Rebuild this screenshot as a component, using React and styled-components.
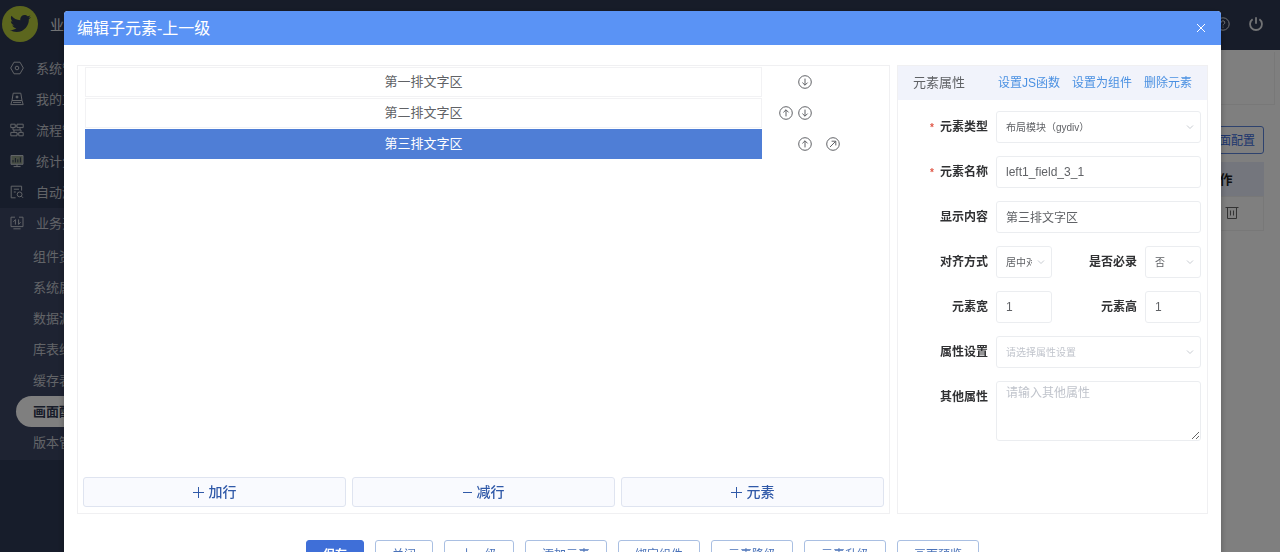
import React, { useState } from 'react';
import styled, { createGlobalStyle, css } from 'styled-components';
import { FaTwitter } from 'react-icons/fa';

const MENUS = [
  { label: '系统管理', icon: 'hexagon' },
  { label: '我的工作', icon: 'desk' },
  { label: '流程管理', icon: 'flow' },
  { label: '统计分析', icon: 'chart' },
  { label: '自动测试', icon: 'search' },
  { label: '业务开发', icon: 'dev' },
];

const SUB_MENUS = [
  '组件资源',
  '系统属性',
  '数据源',
  '库表维护',
  '缓存表',
  '画面配置',
  '版本管理',
];

const ROWS = [
  { label: '第一排文字区', down: true },
  { label: '第二排文字区', up: true, down: true },
  { label: '第三排文字区', up: true, open: true },
];

const FOOTER_BUTTONS = [
  '保存',
  '关闭',
  '上一级',
  '添加元素',
  '绑定组件',
  '元素降级',
  '元素升级',
  '画面预览',
];

const MENU_ICONS = {
  hexagon: (
    <>
      <path d="M4 1.2h6L13.3 7 10 12.8H4L.7 7z" />
      <circle cx="7" cy="7" r="1.8" />
    </>
  ),
  desk: (
    <>
      <path d="M3.2 1.2h7.6l1.2 7.3H2zM2 8.5L.8 12.6h12.4L12 8.5" />
      <circle cx="7" cy="5" r="1" fill="currentColor" />
      <path d="M3 10.4h8" />
    </>
  ),
  flow: (
    <>
      <path d="M.8 1.2h4.4v3.4H.8zM7 1.2h6.2v3.4H7zM.8 9.4H7v3.4H.8zM8.8 9.4h4.4v3.4H8.8z" />
      <path d="M5.2 3H7M3 4.6V7h8v2.4M10 4.6V7M4 7v2.4M7 11h1.8" />
    </>
  ),
  chart: (
    <>
      <path d="M1 1.5h12v8.8H1z" fill="#8c9a86" />
      <path d="M3 8.4V6M5.4 8.4V4M7.8 8.4V5.4M10.4 8.4V3.4" stroke="#2f3a56" />
      <path d="M3.6 12.6h7M7 10.3v2.3" />
    </>
  ),
  search: (
    <>
      <path d="M5.6 12.8H1.2V1.2h10.4v4.4M3.8 4.2h5.2M3.8 7h2" />
      <circle cx="9.6" cy="9.4" r="2.4" />
      <path d="M11.4 11.2l1.6 1.6" />
    </>
  ),
  dev: (
    <>
      <path d="M5 1.2H1v9.4h12V1.2H9M3.4 12.8h7.2" />
      <path d="M5.4 8.6V3.6L3.4 5.8M8.6 3.4v5l2-2.2" />
    </>
  ),
};

const ARROWS = {
  up: 'M7 10.4V3.8M4.4 6.4L7 3.8l2.6 2.6',
  down: 'M7 3.6v6.6M4.4 7.6L7 10.2l2.6-2.6',
  open: 'M4 10l5.6-5.6M5.6 4.2h4.2v4.2',
};

const ArrowButton = ({ type, label }) => (
  <IconButton type="button" aria-label={label}>
    <svg width="14" height="14" viewBox="0 0 14 14" fill="none" stroke="currentColor">
      <circle cx="7" cy="7" r="6.3" />
      <path d={ARROWS[type]} />
    </svg>
  </IconButton>
);

const SelectBox = ({ id, placeholder, children }) => (
  <SelectWrapper>
    <Select id={id} $placeholder={placeholder}>
      {children}
    </Select>
    <svg width="8" height="8" viewBox="0 0 8 8" fill="none" stroke="#c8ccd2">
      <path d="M1 2.5l3 3 3-3" />
    </svg>
  </SelectWrapper>
);

const Sidebar = () => (
  <SidebarNav>
    {MENUS.map(({ label, icon }, i) => (
      <MenuItem href="#" key={label} $open={i === MENUS.length - 1}>
        <svg width="14" height="14" viewBox="0 0 14 14" fill="none" stroke="currentColor">
          {MENU_ICONS[icon]}
        </svg>
        {label}
      </MenuItem>
    ))}
    <SubMenu>
      {SUB_MENUS.map((label) => (
        <SubMenuItem href="#" key={label} $active={label === '画面配置'}>
          {label}
        </SubMenuItem>
      ))}
    </SubMenu>
  </SidebarNav>
);

const Background = () => (
  <Page>
    <TopBar>
      <Logo>
        <FaTwitter size={21} />
      </Logo>
      <Brand>业务</Brand>
      <TopActions>
        <IconButton type="button" aria-label="帮助">
          <svg width="14" height="14" viewBox="0 0 14 14" fill="none" stroke="currentColor">
            <circle cx="7" cy="7" r="6.2" />
            <path d="M5.2 5.6a1.8 1.8 0 1 1 2.6 1.6c-.6.3-.8.6-.8 1.2M7 9.6v1" />
          </svg>
        </IconButton>
        <IconButton type="button" aria-label="退出">
          <svg
            width="14"
            height="14"
            viewBox="0 0 14 14"
            fill="none"
            stroke="currentColor"
            strokeWidth="1.8"
          >
            <path d="M3.6 2.3a5.9 5.9 0 1 0 6.8 0M7 .3v6.5" />
          </svg>
        </IconButton>
      </TopActions>
    </TopBar>
    <PageBody>
      <Sidebar />
      <Content>
        <SearchCard />
        <ConfigButton type="button">画面配置</ConfigButton>
        <Table>
          <thead>
            <tr>
              <th>操作</th>
            </tr>
          </thead>
          <tbody>
            <tr>
              <td>
                <IconButton type="button" aria-label="删除">
                  <svg width="14" height="14" viewBox="0 0 14 14" fill="none" stroke="currentColor">
                    <path d="M.5 1.5h13M2.5 1.5v11h9v-11M5.5 4.5v5M8.5 4.5v5" />
                  </svg>
                </IconButton>
              </td>
            </tr>
          </tbody>
        </Table>
      </Content>
    </PageBody>
  </Page>
);

const App = () => {
  const [selected, setSelected] = useState(2);

  return (
    <>
      <GlobalStyle />
      <Background />
      <Mask>
        <Modal role="dialog" aria-labelledby="modal-title">
          <ModalHeader>
            <ModalTitle id="modal-title">编辑子元素-上一级</ModalTitle>
            <IconButton type="button" aria-label="关闭窗口">
              <svg width="10" height="10" viewBox="0 0 10 10" fill="none" stroke="currentColor">
                <path d="M1 1l8 8M9 1L1 9" />
              </svg>
            </IconButton>
          </ModalHeader>

          <ModalBody>
            <Canvas>
              <div>
                {ROWS.map((row, i) => (
                  <CanvasRow key={row.label}>
                    <RowButton
                      type="button"
                      $selected={selected === i}
                      onClick={() => setSelected(i)}
                    >
                      {row.label}
                    </RowButton>
                    <RowActions>
                      <span>{row.up && !row.open && <ArrowButton type="up" label="上移" />}</span>
                      <span>
                        {row.down && <ArrowButton type="down" label="下移" />}
                        {row.open && <ArrowButton type="up" label="上移" />}
                      </span>
                      <LastAction>
                        {row.open && <ArrowButton type="open" label="进入" />}
                      </LastAction>
                    </RowActions>
                  </CanvasRow>
                ))}
              </div>
              <CanvasFooter>
                <AddButton type="button">
                  <svg width="11" height="11" viewBox="0 0 11 11" stroke="currentColor">
                    <path d="M0 5.5h11M5.5 0v11" />
                  </svg>
                  <span>加行</span>
                </AddButton>
                <AddButton type="button">
                  <svg width="9" height="11" viewBox="0 0 9 11" stroke="currentColor">
                    <path d="M0 5.5h9" />
                  </svg>
                  <span>减行</span>
                </AddButton>
                <AddButton type="button">
                  <svg width="11" height="11" viewBox="0 0 11 11" stroke="currentColor">
                    <path d="M0 5.5h11M5.5 0v11" />
                  </svg>
                  <span>元素</span>
                </AddButton>
              </CanvasFooter>
            </Canvas>

            <Properties>
              <PropertiesHeader>
                <PropertiesTitle>元素属性</PropertiesTitle>
                <PropertiesLinks>
                  <a href="#">设置JS函数</a>
                  <a href="#">设置为组件</a>
                  <a href="#">删除元素</a>
                </PropertiesLinks>
              </PropertiesHeader>
              <Form>
                <Label htmlFor="type" $required>
                  元素类型
                </Label>
                <Wide>
                  <SelectBox id="type">
                    <option>布局模块（gydiv）</option>
                  </SelectBox>
                </Wide>

                <Label htmlFor="name" $required>
                  元素名称
                </Label>
                <Wide>
                  <Input id="name" defaultValue="left1_field_3_1" />
                </Wide>

                <Label htmlFor="content">显示内容</Label>
                <Wide>
                  <Input id="content" defaultValue="第三排文字区" />
                </Wide>

                <Label htmlFor="align">对齐方式</Label>
                <SelectBox id="align">
                  <option>居中对齐</option>
                </SelectBox>
                <Label htmlFor="required">是否必录</Label>
                <SelectBox id="required">
                  <option>否</option>
                  <option>是</option>
                </SelectBox>

                <Label htmlFor="width">元素宽</Label>
                <Input id="width" defaultValue="1" />
                <Label htmlFor="height">元素高</Label>
                <Input id="height" defaultValue="1" />

                <Label htmlFor="props">属性设置</Label>
                <Wide>
                  <SelectBox id="props" placeholder="true">
                    <option>请选择属性设置</option>
                  </SelectBox>
                </Wide>

                <Label htmlFor="others">其他属性</Label>
                <Wide>
                  <TextArea id="others" placeholder="请输入其他属性" />
                </Wide>
              </Form>
            </Properties>
          </ModalBody>

          <ModalFooter>
            {FOOTER_BUTTONS.map((label, i) => (
              <FooterButton type="button" key={label} $primary={i === 0}>
                {label}
              </FooterButton>
            ))}
          </ModalFooter>
        </Modal>
      </Mask>
    </>
  );
};

const GlobalStyle = createGlobalStyle`
  * {
    box-sizing: border-box;
  }

  body {
    margin: 0;
    overflow: hidden;
    background-color: #fff;
  }

  body, button, input, select, textarea {
    font-family: 'Liberation Sans', 'Noto Sans CJK SC', sans-serif;
  }

  a {
    text-decoration: none;
  }

  svg {
    display: block;
    flex-shrink: 0;
  }
`;

const IconButton = styled.button`
  display: flex;
  padding: 0;
  border: 0;
  background: none;
  color: inherit;
  cursor: pointer;
`;

const Page = styled.div`
  display: flex;
  flex-direction: column;
  height: 100vh;
`;

const TopBar = styled.header`
  display: flex;
  align-items: center;
  height: 50px;
  padding: 0 17px 3px 2px;
  background-color: #2f3952;
  color: #e4e6ea;
`;

const Logo = styled.div`
  display: flex;
  align-items: center;
  justify-content: center;
  width: 36px;
  height: 36px;
  margin-right: 12px;
  border-radius: 50%;
  background-color: #b8cc3c;
  color: #2f3952;
`;

const Brand = styled.div`
  font-size: 14px;
`;

const TopActions = styled.div`
  display: flex;
  gap: 19px;
  margin-left: auto;
`;

const PageBody = styled.div`
  display: flex;
  flex: 1;
  min-height: 0;
`;

const SidebarNav = styled.nav`
  width: 160px;
  padding-top: 3px;
  background-color: #2f3a56;
`;

const MenuItem = styled.a`
  display: flex;
  align-items: center;
  gap: 12px;
  height: 31px;
  padding: 0 0 2px 10px;
  font-size: 13px;
  color: #c4c8d0;
  background-color: ${({ $open }) => ($open ? '#3c4664' : 'transparent')};
`;

const SubMenu = styled.div`
  padding: 2px 0;
  background-color: #3c4664;
`;

const SubMenuItem = styled.a`
  display: flex;
  align-items: center;
  height: 31px;
  margin-left: 16px;
  padding: 0 0 2px 17px;
  font-size: 13px;
  color: #c4c8d0;

  ${({ $active }) =>
    $active &&
    css`
      border-radius: 16px 0 0 16px;
      background-color: #fff;
      color: #2f3952;
      font-weight: 700;
    `}
`;

const Content = styled.main`
  display: flex;
  flex-direction: column;
  flex: 1;
  align-items: flex-end;
  padding: 2px 5px 0 12px;
  background-color: #fff;
`;

const SearchCard = styled.div`
  width: 100%;
  height: 53px;
  border: 1px solid #f0f0f0;
  border-top: 0;
`;

const ConfigButton = styled.button`
  height: 28px;
  margin: 21px 11px 8px 0;
  padding: 0 8px 2px;
  border: 1px solid #5c84dc;
  border-radius: 3px;
  background-color: #fff;
  color: #3c6cdc;
  font-size: 12px;
`;

const Table = styled.table`
  width: calc(100% - 11px);
  margin-right: 11px;
  border-collapse: collapse;
  font-size: 13px;

  th,
  td {
    height: 34px;
    padding: 0 31px 0 0;
    text-align: right;
    color: #222;
  }

  td {
    padding-right: 24px;
    border: 1px solid #f0f0f0;
  }

  td button {
    margin-left: auto;
    color: #666;
  }

  th {
    background-color: #e8ecfa;
  }
`;

const Mask = styled.div`
  position: fixed;
  inset: 0;
  overflow: hidden;
  padding: 11px 59px 0 64px;
  background-color: rgba(0, 0, 0, 0.5);
`;

const Modal = styled.section`
  border-radius: 4px;
  background-color: #fff;
  overflow: hidden;
  box-shadow: 0 2px 6px rgba(0, 0, 0, 0.3);
`;

const ModalHeader = styled.header`
  display: flex;
  align-items: center;
  justify-content: space-between;
  height: 34px;
  padding: 0 15px 0 13px;
  background-color: #5a93f5;
  color: #fff;
`;

const ModalTitle = styled.h1`
  margin: 0;
  padding-bottom: 2px;
  font-size: 16px;
  font-weight: 400;
`;

const ModalBody = styled.div`
  display: flex;
  gap: 7px;
  min-height: 449px;
  margin: 20px 13px 0;
`;

const Canvas = styled.section`
  display: flex;
  flex: 1;
  flex-direction: column;
  justify-content: space-between;
  border: 1px solid #f0f0f2;
`;

const CanvasRow = styled.div`
  display: flex;
  align-items: center;
  height: 31px;
  padding-left: 7px;
`;

const RowButton = styled.button`
  flex: 1;
  height: 30px;
  padding: 0 0 2px;
  border: 1px solid ${({ $selected }) => ($selected ? '#4f7ed6' : '#f2f2f4')};
  background-color: ${({ $selected }) => ($selected ? '#4f7ed6' : '#fff')};
  color: ${({ $selected }) => ($selected ? '#fff' : '#606266')};
  font-size: 13px;
`;

const RowActions = styled.div`
  display: grid;
  grid-template-columns: 14px 14px 1fr;
  gap: 5px;
  width: 127px;
  padding-left: 17px;
  color: #606266;
`;

const LastAction = styled.span`
  padding-left: 9px;
`;

const CanvasFooter = styled.div`
  display: flex;
  gap: 6px;
  padding: 0 5px 6px;
`;

const AddButton = styled.button`
  display: flex;
  flex: 1;
  align-items: center;
  justify-content: center;
  gap: 5px;
  height: 30px;
  border: 1px solid #dfe4f0;
  border-radius: 3px;
  background-color: #f9fafe;
  color: #3059a8;
  font-size: 14px;
  font-weight: 500;

  span {
    padding-bottom: 2px;
  }
`;

const Properties = styled.section`
  flex: 0 0 311px;
  border: 1px solid #f0f0f2;
`;

const PropertiesHeader = styled.header`
  display: flex;
  align-items: center;
  justify-content: space-between;
  height: 34px;
  padding: 0 15px 3px;
  background-color: #f1f3fb;
`;

const PropertiesTitle = styled.h2`
  margin: 0;
  font-size: 13px;
  font-weight: 400;
  color: #606266;
`;

const PropertiesLinks = styled.div`
  display: flex;
  gap: 12px;
  font-size: 12px;

  a {
    color: #4a90e2;
  }
`;

const Form = styled.form`
  display: grid;
  grid-template-columns: 90px 56px 1fr 56px;
  gap: 13px 8px;
  padding: 11px 6px 0 0;
`;

const Wide = styled.div`
  grid-column: 2 / -1;
`;

const Label = styled.label`
  padding-top: 1px;
  text-align: right;
  font-size: 12px;
  font-weight: 700;
  line-height: 31px;
  color: #303133;

  ${({ $required }) =>
    $required &&
    css`
      &::before {
        content: '*';
        margin-right: 6px;
        color: #e05a4a;
        font-size: 10px;
      }
    `}
`;

const fieldStyle = css`
  display: block;
  width: 100%;
  height: 32px;
  border: 1px solid #ebedf0;
  border-radius: 3px;
  background-color: #fff;
  color: #606266;
  font-size: 12px;
  outline: none;
`;

const Input = styled.input`
  ${fieldStyle}
  padding: 0 9px 1px;
`;

const SelectWrapper = styled.div`
  position: relative;

  svg {
    position: absolute;
    top: 12px;
    right: 7px;
    pointer-events: none;
  }
`;

const Select = styled.select`
  ${fieldStyle}
  appearance: none;
  padding: 0 19px 0 9px;
  font-size: 10px;
  color: ${({ $placeholder }) => ($placeholder ? '#c0c4cc' : '#606266')};
`;

const TextArea = styled.textarea`
  ${fieldStyle}
  height: 60px;
  padding: 3px 9px;
  line-height: 16px;
  resize: vertical;

  &::placeholder {
    color: #c0c4cc;
  }
`;

const ModalFooter = styled.footer`
  display: flex;
  justify-content: center;
  gap: 11px;
  padding: 26px 0 20px;
`;

const FooterButton = styled.button`
  height: 26px;
  padding: 0 16px;
  border: 1px solid ${({ $primary }) => ($primary ? '#3f6fd8' : '#a9bfe2')};
  border-radius: 3px;
  background-color: ${({ $primary }) => ($primary ? '#3f6fd8' : '#fff')};
  color: ${({ $primary }) => ($primary ? '#fff' : '#4a72b8')};
  font-size: 12px;
  font-weight: ${({ $primary }) => ($primary ? 700 : 400)};
`;

export default App;
